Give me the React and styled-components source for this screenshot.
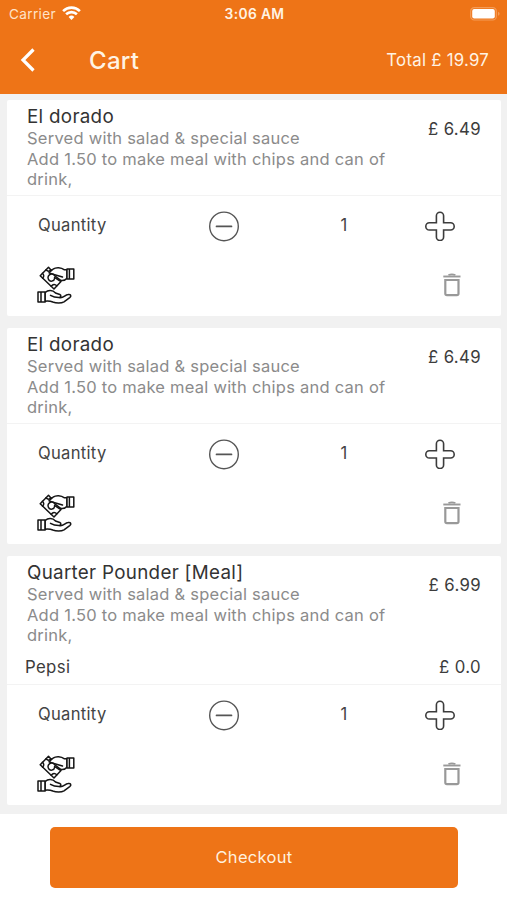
import React from "react";
import styled, { createGlobalStyle } from "styled-components";

const GlobalStyle = createGlobalStyle`
  * {
    box-sizing: border-box;
  }

  body {
    margin: 0;
    background: #fff;
    font-family: Inter, "Liberation Sans", sans-serif;
  }
`;

const Screen = styled.div`
  width: 507px;
  height: 900px;
  display: flex;
  flex-direction: column;
  overflow: hidden;
`;

const Header = styled.header`
  height: 94px;
  background: #ee7417;
  color: #fff3e4;
`;

const StatusBar = styled.div`
  height: 27px;
  display: grid;
  grid-template-columns: 1fr auto 1fr;
  align-items: center;
  padding: 0 7px 0 9px;
  font-size: 13.6px;
`;

const Carrier = styled.div`
  display: flex;
  align-items: center;
  gap: 6px;
  color: #ffe3c8;
  letter-spacing: 0.35px;
`;

const Clock = styled.div`
  font-size: 13.8px;
  font-weight: 600;
  letter-spacing: 0.35px;
`;

const Battery = styled.svg`
  justify-self: end;
`;

const NavBar = styled.div`
  height: 65px;
  display: flex;
  align-items: center;
  padding: 0 18px 0 20px;

  h1 {
    flex: 1;
    margin: 1px 0 0 53px;
    font-size: 24px;
    font-weight: 500;
    letter-spacing: 0.3px;
  }
`;

const Total = styled.span`
  font-size: 16.8px;
  letter-spacing: 0.25px;
`;

const CartList = styled.main`
  height: 720px;
  display: flex;
  flex-direction: column;
  gap: 12px;
  padding: 6px 6px 0 7px;
  background: #f1f1f1;
`;

const Card = styled.section`
  background: #fff;
  border-radius: 2px;
`;

const ItemInfo = styled.div`
  display: flex;
  justify-content: space-between;
  height: 95px;
  padding: 5px 20px 0;

  h2 {
    margin: 0;
    color: #333;
    font-size: 18.8px;
    font-weight: 400;
    line-height: 23px;
    letter-spacing: 0.3px;
  }

  p {
    width: 375px;
    margin: 0;
    color: #8b8b8b;
    font-size: 16.5px;
    line-height: 20.7px;
    letter-spacing: 0.24px;
  }
`;

const Price = styled.span`
  flex: none;
  color: #3c3c3c;
  font-size: 16.8px;
  line-height: 20px;
  letter-spacing: 0.35px;
`;

const ItemPrice = styled(Price)`
  padding-top: 14px;
`;

const Extra = styled.div`
  height: 33px;
  display: flex;
  justify-content: space-between;
  padding: 6px 20px 0 18px;
`;

const Controls = styled.div`
  height: 61px;
  display: grid;
  grid-template-columns: 170px 1fr 48px 57px 30px;
  align-items: center;
  padding: 0 46px 0 31px;
  border-top: 1px solid #f3f3f3;
  color: #444;
  font-size: 16.6px;
  letter-spacing: 0.3px;
`;

const Label = styled.span`
  margin-top: -2px;
`;

const Count = styled.span`
  margin-top: -2px;
  grid-column: 3;
  text-align: center;
`;

const IconButton = styled.button`
  display: flex;
  padding: 0;
  border: 0;
  background: none;
  color: inherit;
`;

const PlusButton = styled(IconButton)`
  grid-column: 5;
`;

const Actions = styled.div`
  height: 60px;
  display: flex;
  justify-content: space-between;
  align-items: flex-start;
  padding: 10px 39px 0 30px;
`;

const TrashButton = styled(IconButton)`
  margin-top: 7px;
`;

const Footer = styled.footer`
  flex: 1;
  padding: 13px 49px 0 50px;
  background: #fff;
`;

const CheckoutButton = styled.button`
  width: 100%;
  height: 61px;
  padding: 0 0 2px;
  border: 0;
  border-radius: 5px;
  background: #ee7417;
  color: #fff0df;
  font-family: inherit;
  font-size: 16.5px;
  letter-spacing: 0.3px;
`;

const WifiIcon = () => (
  <svg width="19" height="15" viewBox="0 0 19 15" fill="none" stroke="#fff" strokeWidth="2.6">
    <path d="M1.1 5.1a12 12 0 0 1 16.8 0" />
    <path d="M4.1 8.3a7.8 7.8 0 0 1 10.8 0" />
    <path d="M9.5 14 6.6 11a4.2 4.2 0 0 1 5.8 0z" fill="#fff" stroke="none" />
  </svg>
);

const BatteryIcon = () => (
  <Battery width="30" height="14" viewBox="0 0 30 14">
    <rect x="0.7" y="0.6" width="25.6" height="12.4" rx="3.6" fill="none" stroke="#f39c58" strokeWidth="1.2" />
    <rect x="2.2" y="2" width="22.6" height="9.6" rx="2" fill="#fff" />
    <path d="M28 4.8v4q1.6-.7 1.6-2t-1.6-2z" fill="#f39c58" />
  </Battery>
);

const BackIcon = () => (
  <svg width="16" height="24" viewBox="0 0 16 24" fill="none" stroke="#fff" strokeWidth="3.2">
    <path d="M13.5 1.5 3 12l10.5 10.5" />
  </svg>
);

const MinusIcon = () => (
  <svg width="32" height="32" viewBox="0 0 32 32" fill="none" stroke="#555" strokeWidth="1.4">
    <circle cx="16" cy="16.4" r="14.3" />
    <path d="M8.5 16.4h15" strokeWidth="1.7" strokeLinecap="round" />
  </svg>
);

const PlusIcon = () => (
  <svg width="30" height="30" viewBox="0 -0.4 30 30" fill="none" stroke="#3c3c3c" strokeWidth="1.6">
    <path d="M11.4 4.4a3.6 3.6 0 0 1 7.2 0v7h7a3.6 3.6 0 0 1 0 7.2h-7v7a3.6 3.6 0 0 1-7.2 0v-7h-7a3.6 3.6 0 0 1 0-7.2h7z" />
  </svg>
);

// one hand giving a banknote, one open palm below it
const HandsIcon = () => (
  <svg
    width="38"
    height="38"
    viewBox="0 0 38 38"
    fill="#fff"
    stroke="#151515"
    strokeWidth="1.5"
    strokeLinejoin="round"
    strokeLinecap="round"
  >
    <path d="M11.5 1.2 3.2 9.8 17 23l7-7.5z" />
    <path d="M9 3.8q2.6 2.8 5.2 0M5.6 12.3q2.4-2.7-.2-5M14.2 20.2q2.8-3.3 5.6-.4" fill="none" />
    <path d="M30 3.8h-2.5C24 1.2 19 1 16 3.2l-4 3.6 3.5 1.4 8.5 6.3c2.4.4 4.5-.5 6-2.3z" />
    <path d="M16 8.2c-3-.5-5 1.3-5 3.4 0 2.3 1.8 3.8 4 3.5 1.7-.3 2.4-1.2 2.6-2.7" />
    <path d="M16 8.2 25.5 11M17.5 11.4l5.2 3.4" fill="none" />
    <path d="M30 3h6.8v10H30zM32.4 3v10" />
    <path d="M1 26h7.2v10H1zM4 26v10" />
    <path d="M8.2 26.5c3-2.8 7.5-2.4 10.3.5l4.3 1.5c1.6.7 1.3 2.6-.3 3 3.7 1 5.4-2.7 8.5-3 3-.5 3.6 1.6 1.7 3.1L27 35.8c-2.7 1.6-8 1.4-11.2.2-2.4-1-4.7-1-7.6-.8z" />
    <path d="M13.5 29.3q4 2.4 9 2.2" fill="none" />
  </svg>
);

const TrashIcon = () => (
  <svg width="19" height="24" viewBox="0 0 19 24" fill="none" stroke="#999" strokeWidth="2.2">
    <path d="M2.3 7h13.2v13.5a1.7 1.7 0 0 1-1.7 1.7H4a1.7 1.7 0 0 1-1.7-1.7z" />
    <path d="M.3 3.5h17.2" strokeWidth="1.9" />
    <path d="M5.4 2q3.5-1.3 7 0" strokeWidth="1.8" />
  </svg>
);

const description = "Served with salad & special sauce";
const mealNote = "Add 1.50 to make meal with chips and can of drink,";

const items = [
  { id: 1, name: "El dorado", price: "6.49", quantity: 1, extras: [] },
  { id: 2, name: "El dorado", price: "6.49", quantity: 1, extras: [] },
  {
    id: 3,
    name: "Quarter Pounder [Meal]",
    price: "6.99",
    quantity: 1,
    extras: [{ name: "Pepsi", price: "0.0" }],
  },
];

const CartItem = ({ item }) => (
  <Card>
    <ItemInfo>
      <div>
        <h2>{item.name}</h2>
        <p>{description}</p>
        <p>{mealNote}</p>
      </div>
      <ItemPrice>£ {item.price}</ItemPrice>
    </ItemInfo>
    {item.extras.map((extra) => (
      <Extra key={extra.name}>
        <Price>{extra.name}</Price>
        <Price>£ {extra.price}</Price>
      </Extra>
    ))}
    <Controls>
      <Label>Quantity</Label>
      <IconButton aria-label="Decrease">
        <MinusIcon />
      </IconButton>
      <Count>{item.quantity}</Count>
      <PlusButton aria-label="Increase">
        <PlusIcon />
      </PlusButton>
    </Controls>
    <Actions>
      <HandsIcon />
      <TrashButton aria-label="Remove">
        <TrashIcon />
      </TrashButton>
    </Actions>
  </Card>
);

const App = () => {
  return (
    <Screen>
      <GlobalStyle />
      <Header>
        <StatusBar>
          <Carrier>
            Carrier <WifiIcon />
          </Carrier>
          <Clock>3:06 AM</Clock>
          <BatteryIcon />
        </StatusBar>
        <NavBar>
          <IconButton aria-label="Back">
            <BackIcon />
          </IconButton>
          <h1>Cart</h1>
          <Total>Total £ 19.97</Total>
        </NavBar>
      </Header>
      <CartList>
        {items.map((item) => (
          <CartItem key={item.id} item={item} />
        ))}
      </CartList>
      <Footer>
        <CheckoutButton>Checkout</CheckoutButton>
      </Footer>
    </Screen>
  );
};

export default App;
